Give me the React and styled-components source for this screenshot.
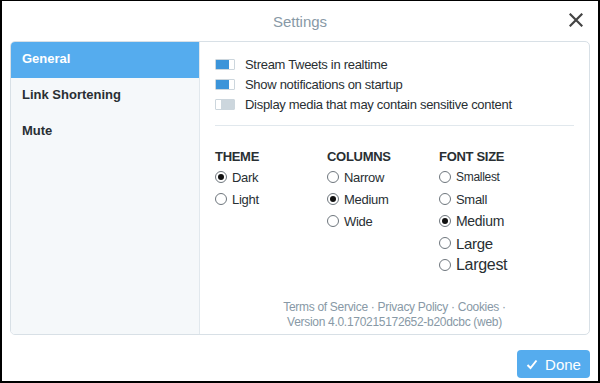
import React from 'react';
import styled, { createGlobalStyle } from 'styled-components';

const GlobalStyle = createGlobalStyle`
  html, body {
    margin: 0;
    padding: 0;
    background: #fff;
  }
  body {
    font-family: "Liberation Sans", Arial, sans-serif;
    color: #292f33;
  }
`;

const Frame = styled.div`
  width: 600px;
  height: 383px;
  box-sizing: border-box;
  border-style: solid;
  border-color: #000;
  border-width: 1px 2px 2px 2px;
  background: #fff;
  display: flex;
  flex-direction: column;
  padding: 0 8px;
`;

const Header = styled.div`
  height: 40px;
  display: flex;
  align-items: center;
  justify-content: center;
  position: relative;
`;

const Title = styled.div`
  font-size: 15px;
  color: #8899a6;
`;

const Close = styled.button`
  position: absolute;
  right: 6px;
  top: 11px;
  width: 16px;
  height: 16px;
  padding: 0;
  border: 0;
  background: none;
  display: flex;
  align-items: center;
  justify-content: center;
`;

const Panel = styled.div`
  height: 294px;
  box-sizing: border-box;
  border: 1px solid #d8e0e6;
  border-radius: 5px;
  display: grid;
  grid-template-columns: 189px 1fr;
  overflow: hidden;
`;

const Sidebar = styled.div`
  background: #f5f8fa;
  border-right: 1px solid #e1e8ed;
  display: flex;
  flex-direction: column;
`;

const NavItem = styled.div`
  height: 36px;
  box-sizing: border-box;
  display: flex;
  align-items: center;
  padding: 0 0 3px 11px;
  font-size: 13px;
  font-weight: bold;
  color: ${({ active }) => (active ? '#fff' : '#292f33')};
  background: ${({ active }) => (active ? '#55acee' : 'transparent')};
`;

const Content = styled.div`
  padding: 14px 15px 0 15px;
  display: flex;
  flex-direction: column;
  letter-spacing: -0.3px;
`;

const ToggleList = styled.div`
  display: flex;
  flex-direction: column;
  gap: 4px;
  padding-bottom: 13px;
  border-bottom: 1px solid #e1e8ed;
`;

const ToggleRow = styled.div`
  display: flex;
  align-items: center;
  height: 16px;
  font-size: 13px;
`;

const Toggle = styled.span`
  width: 20px;
  height: 11px;
  box-sizing: border-box;
  border: 1px solid #ccd6dd;
  border-radius: 1px;
  margin-right: 10px;
  display: flex;
  flex-direction: ${({ on }) => (on ? 'row' : 'row-reverse')};
  background: #fff;

  &::before {
    content: '';
    flex: 1;
    background: ${({ on }) => (on ? '#3b94d9' : '#ccd6dd')};
  }

  &::after {
    content: '';
    width: 5px;
    background: #fff;
  }
`;

const Columns = styled.div`
  display: grid;
  grid-template-columns: 112px 112px 1fr;
  padding-top: 23px;
`;

const Column = styled.div`
  display: flex;
  flex-direction: column;
`;

const ColHead = styled.div`
  font-size: 13px;
  font-weight: bold;
  text-transform: uppercase;
  height: 16px;
  line-height: 16px;
  margin-bottom: 1px;
`;

const RadioRow = styled.div`
  display: flex;
  align-items: center;
  height: 22px;
  font-size: ${({ size }) => size || 13}px;
`;

const Radio = styled.span`
  width: 12px;
  height: 12px;
  box-sizing: border-box;
  border: 1px solid #6e767d;
  border-radius: 50%;
  margin-right: 5px;
  flex: none;
  display: flex;
  align-items: center;
  justify-content: center;

  &::after {
    content: '';
    width: 6px;
    height: 6px;
    border-radius: 50%;
    background: ${({ checked }) => (checked ? '#111' : 'transparent')};
  }
`;

const Legal = styled.div`
  margin-top: auto;
  padding-bottom: 4px;
  text-align: center;
  font-size: 12px;
  line-height: 15px;
  color: #8899a6;
`;

const Footer = styled.div`
  flex: 1;
  display: flex;
  align-items: flex-end;
  justify-content: flex-end;
  padding-bottom: 3px;
`;

const DoneButton = styled.button`
  width: 73px;
  height: 28px;
  border: 0;
  border-radius: 4px;
  background: #55acee;
  color: #fff;
  font-family: "Liberation Sans", Arial, sans-serif;
  font-size: 15px;
  display: flex;
  align-items: center;
  justify-content: center;
  gap: 7px;
  padding: 0;
`;

const toggles = [
  { label: 'Stream Tweets in realtime', on: true },
  { label: 'Show notifications on startup', on: true },
  { label: 'Display media that may contain sensitive content', on: false },
];

const groups = [
  {
    title: 'Theme',
    options: [
      { label: 'Dark', checked: true },
      { label: 'Light' },
    ],
  },
  {
    title: 'Columns',
    options: [
      { label: 'Narrow' },
      { label: 'Medium', checked: true },
      { label: 'Wide' },
    ],
  },
  {
    title: 'Font Size',
    options: [
      { label: 'Smallest', size: 12 },
      { label: 'Small', size: 13 },
      { label: 'Medium', size: 14, checked: true },
      { label: 'Large', size: 15 },
      { label: 'Largest', size: 16 },
    ],
  },
];

const App = () => (
  <>
    <GlobalStyle />
    <Frame>
      <Header>
        <Title>Settings</Title>
        <Close aria-label="Close">
          <svg width="14" height="14" viewBox="0 0 14 14">
            <path d="M1.5 1.5 L12.5 12.5 M12.5 1.5 L1.5 12.5" stroke="#444" strokeWidth="2.2" strokeLinecap="square" />
          </svg>
        </Close>
      </Header>
      <Panel>
        <Sidebar>
          <NavItem active>General</NavItem>
          <NavItem>Link Shortening</NavItem>
          <NavItem>Mute</NavItem>
        </Sidebar>
        <Content>
          <ToggleList>
            {toggles.map((t) => (
              <ToggleRow key={t.label}>
                <Toggle on={t.on} />
                {t.label}
              </ToggleRow>
            ))}
          </ToggleList>
          <Columns>
            {groups.map((g) => (
              <Column key={g.title}>
                <ColHead>{g.title}</ColHead>
                {g.options.map((o) => (
                  <RadioRow key={o.label} size={o.size}>
                    <Radio checked={o.checked} />
                    {o.label}
                  </RadioRow>
                ))}
              </Column>
            ))}
          </Columns>
          <Legal>
            Terms of Service · Privacy Policy · Cookies ·
            <br />
            Version 4.0.170215172652-b20dcbc (web)
          </Legal>
        </Content>
      </Panel>
      <Footer>
        <DoneButton>
          <svg width="12" height="11" viewBox="0 0 12 11">
            <path d="M1.5 6 L4.5 9 L10.5 1.5" stroke="#fff" strokeWidth="2" fill="none" />
          </svg>
          Done
        </DoneButton>
      </Footer>
    </Frame>
  </>
);

export default App;
